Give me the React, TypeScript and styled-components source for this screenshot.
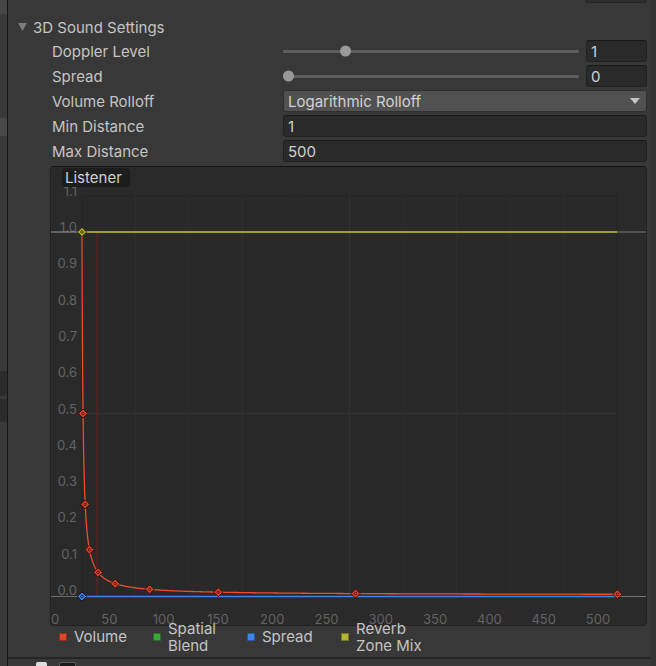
import React from 'react';
import styled, { createGlobalStyle } from 'styled-components';

const Global = createGlobalStyle`
  html, body { margin: 0; padding: 0; background: #383838; }
  #root { width: 656px; height: 666px; overflow: hidden; }
`;

const Screen = styled.div`
  width: 656px;
  height: 666px;
  display: flex;
  background: #383838;
  overflow: hidden;
  font-family: Inter, "Noto Sans", sans-serif;
  color: #c4c4c4;
`;

const LeftStrip = styled.div`
  width: 7px;
  flex: none;
  display: flex;
  flex-direction: column;
  background: #3a3a3a;
`;

const StripBlock = styled.div<{ $top: number; $h: number; $c: string }>`
  margin-top: ${(p) => p.$top}px;
  height: ${(p) => p.$h}px;
  background: ${(p) => p.$c};
  flex: none;
`;

const Divider = styled.div`
  width: 1px;
  flex: none;
  background: #161616;
`;

const RightStrip = styled.div`
  width: 5px;
  flex: none;
  background: #333333;
`;

const Main = styled.div`
  width: 643px;
  flex: none;
  box-sizing: border-box;
  padding-right: 4px;
  display: flex;
  flex-direction: column;
`;

const TopStub = styled.div`
  height: 3px;
  display: flex;
  justify-content: flex-end;
  flex: none;
`;

const StubField = styled.div`
  width: 62px;
  height: 3px;
  box-sizing: border-box;
  background: #2d2d2d;
  border: 1px solid #232323;
  border-top: none;
  border-radius: 0 0 3px 3px;
`;

const Header = styled.div`
  height: 22px;
  margin-top: 13px;
  flex: none;
  display: flex;
  align-items: center;
  gap: 6px;
  padding-left: 10px;
  font-size: 15px;
  color: #c4c4c4;
`;

const Rows = styled.div`
  margin-top: 2px;
  display: flex;
  flex-direction: column;
  gap: 3px;
`;

const Row = styled.div`
  height: 22px;
  display: flex;
  align-items: center;
  padding-left: 44px;
`;

const Label = styled.div`
  width: 231px;
  flex: none;
  font-size: 15px;
  color: #c4c4c4;
  white-space: nowrap;
`;

const Slider = styled.div`
  flex: 1;
  height: 22px;
  margin-right: 7px;
  position: relative;
  display: flex;
  align-items: center;
  &::before {
    content: '';
    width: 100%;
    height: 3px;
    background: #5e5e5e;
    border-radius: 1px;
  }
`;

const Thumb = styled.div<{ $f: number }>`
  position: absolute;
  top: 50%;
  left: calc(${(p) => p.$f} * (100% - 11px));
  width: 11px;
  height: 11px;
  border-radius: 50%;
  background: #999999;
  transform: translateY(-50%);
`;

const Field = styled.div<{ $w?: number }>`
  ${(p) => (p.$w ? `width: ${p.$w}px; flex: none;` : 'flex: 1;')}
  height: 22px;
  box-sizing: border-box;
  background: #2a2a2a;
  border: 1px solid #212121;
  border-top-color: #1a1a1a;
  border-radius: 3px;
  padding-left: 4px;
  display: flex;
  align-items: center;
  font-size: 15px;
  color: #d2d2d2;
`;

const Dropdown = styled.div`
  flex: 1;
  height: 22px;
  box-sizing: border-box;
  background: #515151;
  border: 1px solid #303030;
  border-radius: 3px;
  padding: 0 6px 0 4px;
  display: flex;
  align-items: center;
  justify-content: space-between;
  font-size: 15px;
  color: #d2d2d2;
`;

const CurvePanel = styled.div`
  margin: 4px 0 0 42px;
  height: 460px;
  flex: none;
  box-sizing: border-box;
  position: relative;
  background: #2a2a2a;
  border: 1px solid #222222;
  border-top-color: #141414;
  border-radius: 4px;
  overflow: hidden;
  svg { display: block; }
`;

const ListenerTag = styled.div`
  position: absolute;
  left: 11px;
  top: 1px;
  width: 68px;
  height: 19px;
  box-sizing: border-box;
  padding-left: 3px;
  background: #1d1d1d;
  border-radius: 4px;
  display: flex;
  align-items: center;
  font-size: 15px;
  color: #d0d0d0;
`;

const Legend = styled.div`
  position: relative;
  z-index: 1;
  height: 22px;
  flex: none;
  display: flex;
  align-items: center;
  padding-left: 51px;
`;

const LegendItem = styled.div`
  width: 94px;
  flex: none;
  display: flex;
  align-items: center;
  gap: 7px;
`;

const Swatch = styled.div<{ $c: string }>`
  width: 8px;
  height: 8px;
  flex: none;
  background: ${(p) => p.$c};
  box-shadow: inset 0 0 0 1px rgba(0, 0, 0, 0.35);
`;

const LegendText = styled.div`
  max-width: 74px;
  font-size: 15px;
  line-height: 17.5px;
  color: #c4c4c4;
`;

const Separator = styled.div`
  margin: 9px -4px 0 0;
  height: 2px;
  flex: none;
  background: #252525;
`;

const NextRow = styled.div`
  margin-top: 3px;
  padding-left: 28px;
  display: flex;
  gap: 12px;
  flex: none;
`;

const Check = styled.div`
  width: 11px;
  height: 11px;
  border-radius: 2px;
  background: #dedede;
`;

const DarkBox = styled.div`
  width: 17px;
  height: 11px;
  box-sizing: border-box;
  border-radius: 2px;
  background: #1b1b1b;
  border: 1px solid #5a5a5a;
`;

const FoldArrow = () => (
  <svg width="9" height="8" viewBox="0 0 9 8">
    <polygon points="0,0 9,0 4.5,8" fill="#7c7c7c" />
  </svg>
);

const DropArrow = () => (
  <svg width="10" height="6" viewBox="0 0 10 6">
    <polygon points="0,0 10,0 5,6" fill="#c4c4c4" />
  </svg>
);

const X0 = 80.9;
const XS = 1.073;
const Y0 = 595;
const YS = 363;
const px = (d: number) => X0 + d * XS;
const vy = (v: number) => Y0 - v * YS;

const Key = ({ x, y, fill, dark }: { x: number; y: number; fill: string; dark: string }) => (
  <g>
    <polygon
      points={`${x},${y - 4.5} ${x + 4.5},${y} ${x},${y + 4.5} ${x - 4.5},${y}`}
      fill={fill}
      stroke={dark}
      strokeWidth={1}
    />
    <circle cx={x} cy={y} r={1.3} fill="none" stroke={dark} strokeWidth={0.9} />
  </g>
);

const Chart = () => {
  const pts: string[] = [];
  for (let i = 0; i <= 500; i++) {
    const d = Math.pow(500, i / 500);
    pts.push(`${px(d).toFixed(2)},${vy(1 / d).toFixed(2)}`);
  }
  const keysD = [2, 4, 8, 16, 32, 64, 128, 256, 500];
  const yLabels = [1.1, 1.0, 0.9, 0.8, 0.7, 0.6, 0.5, 0.4, 0.3, 0.2, 0.1, 0.0];
  const xLabels = [0, 50, 100, 150, 200, 250, 300, 350, 400, 450, 500];
  const gx = (k: number) => 82 + k * 53.5;
  return (
    <svg width="595" height="458" viewBox="51 167 595 458">
      <rect x={82} y={196} width={535} height={400} fill="#292929" stroke="#252525" strokeWidth={1} />
      {Array.from({ length: 9 }, (_, i) => i + 1).map((k) => (
        <line key={k} x1={gx(k)} y1={196} x2={gx(k)} y2={596} stroke={k === 5 ? '#323232' : '#2e2e2e'} strokeWidth={1} />
      ))}
      <line x1={82} y1={vy(0.5)} x2={617} y2={vy(0.5)} stroke="#333333" strokeWidth={1} />
      {yLabels.map((v) => (
        <text key={v} x={77} y={vy(v)} textAnchor="end" fontSize={13} fill="#636363" fontFamily="Inter, sans-serif">
          {v.toFixed(1)}
        </text>
      ))}
      {xLabels.map((v, i) => (
        <text key={v} x={55 + i * 54.3} y={624} textAnchor="middle" fontSize={13} fill="#636363" fontFamily="Inter, sans-serif">
          {v}
        </text>
      ))}
      <line x1={51} y1={232} x2={82} y2={232} stroke="#9a9a9a" strokeWidth={1} />
      <line x1={617} y1={232} x2={646} y2={232} stroke="#7c7c7c" strokeWidth={1} />
      <line x1={51} y1={596.5} x2={82} y2={596.5} stroke="#6c6c6c" strokeWidth={1} />
      <line x1={617} y1={596.5} x2={646} y2={596.5} stroke="#747474" strokeWidth={1} />
      <line x1={97.3} y1={233} x2={97.3} y2={596} stroke="#5a2323" strokeWidth={1.6} />
      <line x1={82} y1={232} x2={617} y2={232} stroke="#c4c435" strokeWidth={1.5} />
      <line x1={82} y1={596.5} x2={617} y2={596.5} stroke="#3b86e8" strokeWidth={1.5} />
      <polyline points={pts.join(' ')} fill="none" stroke="#f04b2d" strokeWidth={1.3} />
      {keysD.map((d) => (
        <Key key={d} x={px(d)} y={vy(1 / d)} fill="#e0452b" dark="#3a0e07" />
      ))}
      <Key x={82} y={596.5} fill="#3b86e8" dark="#0c1c33" />
      <Key x={82} y={232} fill="#bdbd30" dark="#2a2a08" />
    </svg>
  );
};

export default function App() {
  return (
    <>
      <Global />
      <Screen>
        <LeftStrip>
          <StripBlock $top={0} $h={14} $c="#464646" />
          <StripBlock $top={104} $h={18} $c="#484848" />
          <StripBlock $top={235} $h={25} $c="#2c2c2c" />
          <StripBlock $top={3} $h={23} $c="#2c2c2c" />
        </LeftStrip>
        <Divider />
        <Main>
          <TopStub>
            <StubField />
          </TopStub>
          <Header>
            <FoldArrow />
            3D Sound Settings
          </Header>
          <Rows>
            <Row>
              <Label>Doppler Level</Label>
              <Slider>
                <Thumb $f={0.2} />
              </Slider>
              <Field $w={61}>1</Field>
            </Row>
            <Row>
              <Label>Spread</Label>
              <Slider>
                <Thumb $f={0} />
              </Slider>
              <Field $w={61}>0</Field>
            </Row>
            <Row>
              <Label>Volume Rolloff</Label>
              <Dropdown>
                <span>Logarithmic Rolloff</span>
                <DropArrow />
              </Dropdown>
            </Row>
            <Row>
              <Label>Min Distance</Label>
              <Field>1</Field>
            </Row>
            <Row>
              <Label>Max Distance</Label>
              <Field>500</Field>
            </Row>
          </Rows>
          <CurvePanel>
            <Chart />
            <ListenerTag>Listener</ListenerTag>
          </CurvePanel>
          <Legend>
            <LegendItem>
              <Swatch $c="#e0452b" />
              <LegendText>Volume</LegendText>
            </LegendItem>
            <LegendItem>
              <Swatch $c="#3aa83a" />
              <LegendText>Spatial Blend</LegendText>
            </LegendItem>
            <LegendItem>
              <Swatch $c="#3b86e8" />
              <LegendText>Spread</LegendText>
            </LegendItem>
            <LegendItem>
              <Swatch $c="#b5b534" />
              <LegendText>Reverb Zone Mix</LegendText>
            </LegendItem>
          </Legend>
          <Separator />
          <NextRow>
            <Check />
            <DarkBox />
          </NextRow>
        </Main>
        <RightStrip />
      </Screen>
    </>
  );
}
